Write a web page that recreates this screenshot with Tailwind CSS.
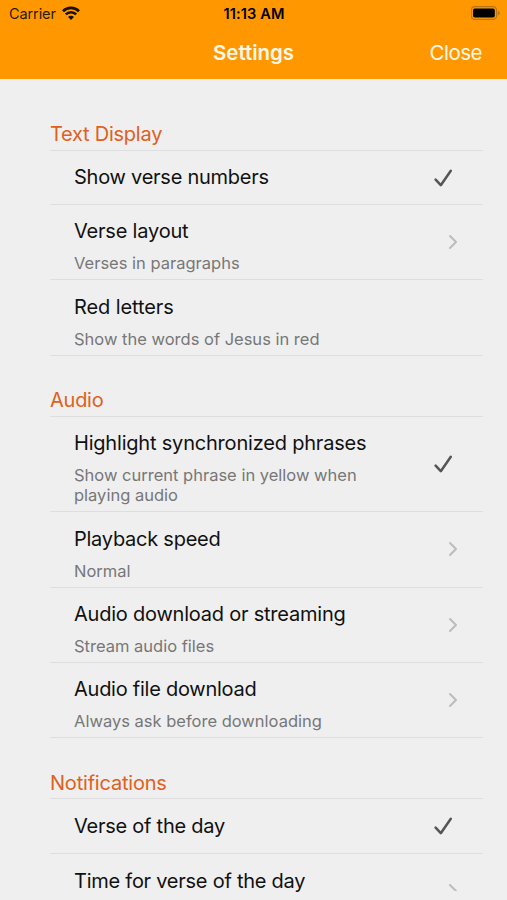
<!DOCTYPE html>
<html lang="en">
<head>
    <meta charset="UTF-8">
    <meta name="viewport" content="width=device-width, initial-scale=1.0">
    <title>Settings</title>
    <script src="https://cdn.jsdelivr.net/npm/@tailwindcss/browser@4"></script>
</head>
<body class="bg-[#efefef] font-['Inter',sans-serif] h-[900px] overflow-hidden">
<svg class="hidden">
    <symbol id="check" viewBox="0 0 20 20">
        <path d="M2.6 11.6 7.8 17.2 17.8 2.8" fill="none" stroke="#555" stroke-width="2.5" stroke-linecap="round" stroke-linejoin="round"/>
    </symbol>
    <symbol id="chevron" viewBox="0 0 10 16">
        <path d="M2 2 8 8 2 14" fill="none" stroke="#bdbdbd" stroke-width="2.1" stroke-linecap="round" stroke-linejoin="round"/>
    </symbol>
</svg>

<header class="h-[79px] bg-[#ff9800]">
    <div class="grid grid-cols-3 items-center h-[27px] pl-[9px] pr-[6px] text-black">
        <div class="flex items-center gap-[6px]">
            <span class="text-[14.5px] tracking-[-0.1px] text-[#2b1a00]">Carrier</span>
            <svg class="w-[18px] h-[14px] mb-[2px]" viewBox="0 0 18 14" fill="none" stroke="#1a1000" stroke-width="2.7">
                <path d="M1 5.2a11.3 11.3 0 0 1 16 0"/>
                <path d="M3.8 8.4a7.4 7.4 0 0 1 10.4 0"/>
                <path d="M9 14 6 11a4.2 4.2 0 0 1 6 0z" fill="#1a1000" stroke="none"/>
            </svg>
        </div>
        <span class="pt-[2px] pr-[2px] text-[14.6px] tracking-[0.1px] font-semibold text-center whitespace-nowrap">11:13 AM</span>
        <svg class="w-[30px] h-[14px] justify-self-end mb-px" viewBox="0 0 30 14">
            <rect x="0.2" y="0.6" width="25.4" height="12.8" rx="3.6" fill="none" stroke="#b87414" stroke-width="1.3"/>
            <rect x="2" y="2.4" width="21.8" height="9.2" rx="1.8" fill="#000"/>
            <path d="M27 4.9c2.4.6 2.4 3.8 0 4.4z" fill="#b87414"/>
        </svg>
    </div>
    <div class="grid grid-cols-3 items-center h-[52px] px-[25px] pt-px text-[#fff8e8]">
        <span></span>
        <h1 class="text-[20.4px] font-semibold text-center">Settings</h1>
        <span class="text-[20.5px] tracking-[-0.5px] text-right">Close</span>
    </div>
</header>

<main class="pl-[50px] pr-6 pt-[40px]">
    <section>
        <h2 class="h-[31px] leading-[30px] text-[20px] tracking-[-0.25px] text-[#e06020]">Text Display</h2>
        <div class="flex h-[54px] border-t border-[#dedede] pl-6 pr-[30px] items-center justify-between">
            <p class="pb-[2px] text-[20px] tracking-[-0.25px] text-[#111]">Show verse numbers</p>
            <svg class="w-5 h-5"><use href="#check"/></svg>
        </div>
        <div class="flex h-[75px] border-t border-[#dedede] pl-6 pr-[25px] items-center justify-between">
            <div class="pt-[6px]">
                <p class="text-[20px] tracking-[-0.2px] leading-[36px] text-[#111]">Verse layout</p>
                <p class="text-[16.5px] leading-[28px] text-[#777]">Verses in paragraphs</p>
            </div>
            <svg class="w-[10px] h-4"><use href="#chevron"/></svg>
        </div>
        <div class="flex h-[76.5px] border-y border-[#dedede] pl-6 items-center">
            <div class="pt-[7px]">
                <p class="text-[20px] tracking-[-0.1px] leading-[36px] text-[#111]">Red letters</p>
                <p class="text-[16.5px] leading-[28px] text-[#777]">Show the words of Jesus in red</p>
            </div>
        </div>
    </section>

    <section class="pt-[29.5px]">
        <h2 class="h-[31px] leading-[30px] text-[20px] tracking-[-0.25px] text-[#e06020]">Audio</h2>
        <div class="flex h-[95px] border-t border-[#dedede] pl-6 pr-[30px] items-center justify-between">
            <div class="pt-[6px]">
                <p class="text-[20px] tracking-[-0.2px] leading-[36px] text-[#111]">Highlight synchronized phrases</p>
                <p class="pt-1 pb-1 text-[16.5px] leading-[20.5px] text-[#777]">Show current phrase in yellow when<br>playing audio</p>
            </div>
            <svg class="w-5 h-5"><use href="#check"/></svg>
        </div>
        <div class="flex h-[75.5px] border-t border-[#dedede] pl-6 pr-[25px] items-center justify-between">
            <div class="pt-[7px]">
                <p class="text-[20px] tracking-[-0.25px] leading-[36px] text-[#111]">Playback speed</p>
                <p class="text-[16.5px] leading-[28px] text-[#777]">Normal</p>
            </div>
            <svg class="w-[10px] h-4"><use href="#chevron"/></svg>
        </div>
        <div class="flex h-[75.5px] border-t border-[#dedede] pl-6 pr-[25px] items-center justify-between">
            <div class="pt-[6px]">
                <p class="text-[20px] tracking-[-0.22px] leading-[36px] text-[#111]">Audio download or streaming</p>
                <p class="text-[16.5px] leading-[28px] text-[#777]">Stream audio files</p>
            </div>
            <svg class="w-[10px] h-4"><use href="#chevron"/></svg>
        </div>
        <div class="flex h-[76px] border-y border-[#dedede] pl-6 pr-[25px] items-center justify-between">
            <div class="pt-[6px]">
                <p class="text-[20px] tracking-[-0.25px] leading-[36px] text-[#111]">Audio file download</p>
                <p class="text-[16.5px] leading-[28px] text-[#777]">Always ask before downloading</p>
            </div>
            <svg class="w-[10px] h-4"><use href="#chevron"/></svg>
        </div>
    </section>

    <section class="pt-[29px]">
        <h2 class="h-[31px] leading-[32px] text-[20px] tracking-[-0.2px] text-[#e06020]">Notifications</h2>
        <div class="flex h-[55px] border-t border-[#dedede] pl-6 pr-[30px] items-center justify-between">
            <p class="text-[20px] tracking-[-0.25px] text-[#111]">Verse of the day</p>
            <svg class="w-5 h-5"><use href="#check"/></svg>
        </div>
        <div class="flex border-t border-[#dedede] pl-6 pr-[25px] items-start justify-between">
            <p class="pt-[9px] text-[20px] tracking-[-0.25px] leading-[36px] text-[#111]">Time for verse of the day</p>
            <div class="h-[37px] overflow-hidden">
                <svg class="mt-[29px] w-[10px] h-4"><use href="#chevron"/></svg>
            </div>
        </div>
    </section>
</main>
</body>
</html>
